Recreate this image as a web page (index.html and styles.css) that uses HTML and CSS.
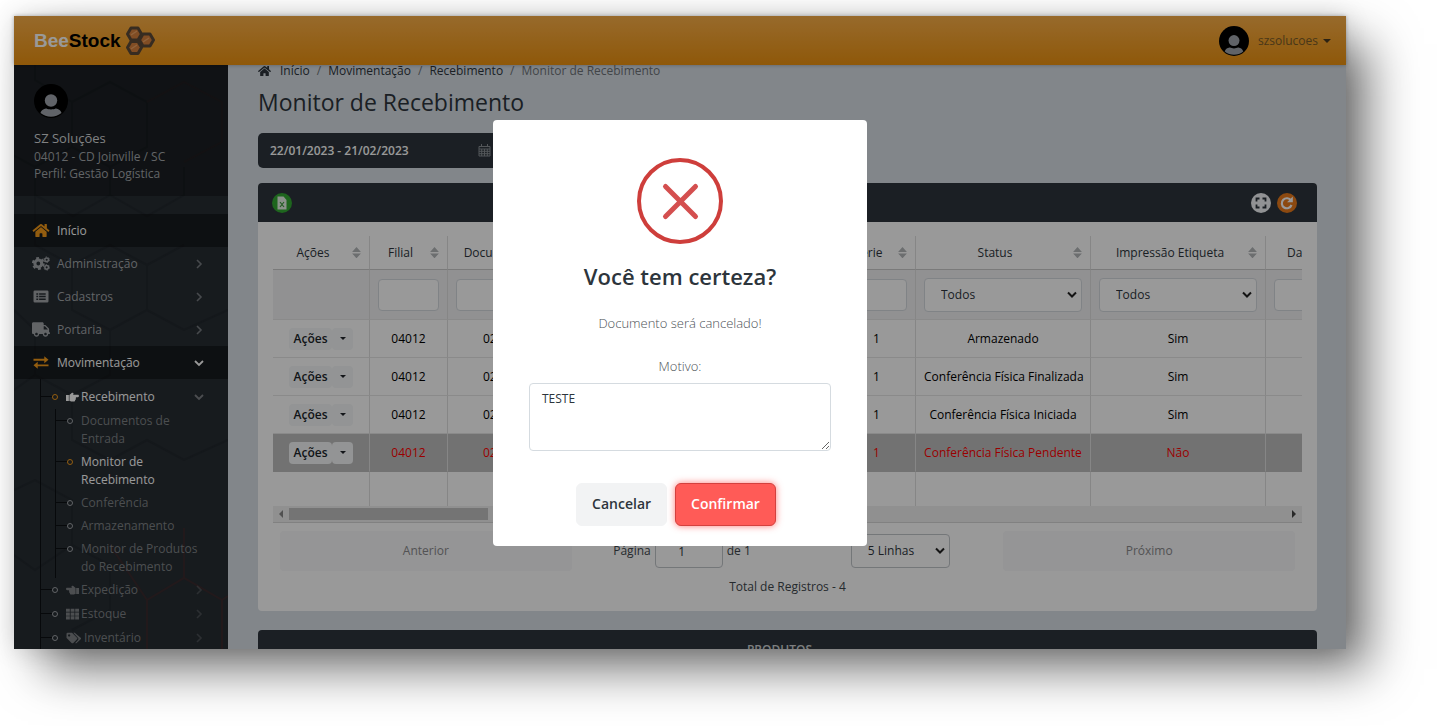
FILE: index.html
```html
<!DOCTYPE html>
<html lang="pt-BR">
<head>
<meta charset="utf-8">
<title>BeeStock - Monitor de Recebimento</title>
<link rel="stylesheet" href="styles.css">
</head>
<body>
<svg width="0" height="0" class="defs" aria-hidden="true">
  <symbol id="home" viewBox="0 0 576 512"><path d="M280.37 148.26L96 300.11V464a16 16 0 0 0 16 16l112.06-.29a16 16 0 0 0 15.92-16V368a16 16 0 0 1 16-16h64a16 16 0 0 1 16 16v95.64a16 16 0 0 0 16 16.05L464 480a16 16 0 0 0 16-16V300L295.67 148.26a12.19 12.19 0 0 0-15.3 0zM571.6 251.47L488 182.56V44.05a12 12 0 0 0-12-12h-56a12 12 0 0 0-12 12v72.61L318.47 43a48 48 0 0 0-61 0L4.34 251.47a12 12 0 0 0-1.6 16.9l25.5 31A12 12 0 0 0 45.15 301l235.22-193.74a12.19 12.19 0 0 1 15.3 0L530.9 301a12 12 0 0 0 16.9-1.6l25.5-31a12 12 0 0 0-1.7-16.93z"/></symbol>
  <symbol id="truck" viewBox="0 0 640 512"><path d="M624 352h-16V243.9c0-12.700-5.100-24.900-14.100-33.900L494 110.100c-9-9-21.200-14.100-33.900-14.100H416V48c0-26.500-21.500-48-48-48H48C21.500 0 0 21.500 0 48v320c0 26.500 21.500 48 48 48h16c0 53 43 96 96 96s96-43 96-96h128c0 53 43 96 96 96s96-43 96-96h48c8.800 0 16-7.200 16-16v-32c0-8.800-7.200-16-16-16zM160 464c-26.500 0-48-21.500-48-48s21.500-48 48-48 48 21.500 48 48-21.500 48-48 48zm320 0c-26.500 0-48-21.500-48-48s21.500-48 48-48 48 21.500 48 48-21.500 48-48 48zm80-208H416V144h44.100l99.900 99.900V256z"/></symbol>
  <symbol id="cogs" viewBox="0 0 20 16"><g fill="none" stroke="currentColor"><circle cx="7" cy="8" r="3.800" stroke-width="3.400"/><circle cx="7" cy="8" r="6" stroke-width="2.200" stroke-dasharray="3.140 3.143"/><circle cx="16.300" cy="3.800" r="2" stroke-width="1.700"/><circle cx="16.300" cy="3.800" r="3.100" stroke-width="1" stroke-dasharray="1.620 1.625"/><circle cx="16.300" cy="12.300" r="2" stroke-width="1.700"/><circle cx="16.300" cy="12.300" r="3.100" stroke-width="1" stroke-dasharray="1.620 1.625"/></g></symbol>
  <symbol id="list" viewBox="0 0 16 16"><path fill-rule="evenodd" d="M1.500 1.500h13A1.500 1.500 0 0 1 16 3v10a1.500 1.500 0 0 1-1.500 1.500h-13A1.500 1.500 0 0 1 0 13V3A1.500 1.500 0 0 1 1.500 1.500zM3 4.500v1.600h2V4.500zm3 0v1.600h7V4.500zM3 7.200v1.600h2V7.200zm3 0v1.600h7V7.200zM3 10v1.600h2V10zm3 0v1.600h7V10z"/></symbol>
  <symbol id="exchange" viewBox="0 0 16 16"><path d="M0 4h11.500V1.300L16 5l-4.500 3.700V6H0zM16 10v2H4.500v2.700L0 11l4.500-3.700V10z"/></symbol>
  <symbol id="hand" viewBox="0 0 16 14"><path d="M0 4.500h3.500V12H0zM4.200 4.500L7 2.200C8.600 1 9.900 2.500 9 3.700L8.600 4.300H14.600c1.800 0 1.800 2.900 0 2.900H12c.8.700.5 1.800-.3 2 .6.800.1 1.700-.6 1.800.2.900-.4 1.600-1.400 1.600H7C5.800 12.600 5.500 11.800 4.200 11.800z"/></symbol>
  <symbol id="hand-left" viewBox="0 0 16 14"><path transform="matrix(-1 0 0 1 16 0)" d="M0 4.500h3.500V12H0zM4.200 4.500L7 2.200C8.600 1 9.900 2.500 9 3.700L8.600 4.300H14.600c1.800 0 1.800 2.900 0 2.900H12c.8.700.5 1.800-.3 2 .6.800.1 1.700-.6 1.800.2.900-.4 1.600-1.400 1.600H7C5.800 12.600 5.500 11.800 4.200 11.800z"/></symbol>
  <symbol id="grid" viewBox="0 0 16 14"><path d="M0 .5h4.700v3.800H0zM5.700.5h4.700v3.800H5.700zM11.300.5H16v3.800h-4.700zM0 5.200h4.700V9H0zM5.700 5.200h4.700V9H5.700zM11.300 5.200H16V9h-4.700zM0 9.900h4.700v3.800H0zM5.700 9.900h4.700v3.800H5.700zM11.300 9.900H16v3.800h-4.700z"/></symbol>
  <symbol id="tags" viewBox="0 0 20 16"><path fill-rule="evenodd" d="M0 2.500A1.500 1.500 0 0 1 1.500 1h5.300c.5 0 .9.200 1.200.5l6 6c.7.700.7 1.600 0 2.200l-5 5c-.7.600-1.600.6-2.200 0l-6.300-6.300C.2 8.100 0 7.700 0 7.200zM3.500 3a1.500 1.500 0 1 0 .01 0z"/><path d="M9 1h1.500c.5 0 .9.200 1.200.5l7.200 6c.7.700.7 1.600 0 2.200l-5.400 5c-.6.600-1.300.6-1.900.1l3.700-4.100c.8-.9.800-2.200-.1-3.100z"/></symbol>
  <symbol id="chev" viewBox="0 0 10 10"><path d="M3 1l4 4-4 4" fill="none" stroke="currentColor" stroke-width="1.600"/></symbol>
  <symbol id="chevd" viewBox="0 0 10 10"><path d="M1 3l4 4 4-4" fill="none" stroke="currentColor" stroke-width="1.800"/></symbol>
  <symbol id="sort" viewBox="0 0 8 10"><path d="M0 4.500L4 0l4 4.500zM0 5.800h8L4 10.300z"/></symbol>
  <symbol id="user" viewBox="0 0 34 34"><circle cx="17" cy="17" r="17" fill="#000"/><path d="M6.500 29C7.500 25.500 11 24.500 12.500 24.500c2 1.200 7 1.200 9 0 1.500 0 5 1 6 4.500A17 17 0 0 1 6.500 29z" fill="#a0a6ad"/><circle cx="17" cy="16.500" r="6.200" fill="#a0a6ad"/></symbol>
</svg>

<div class="app">
  <header class="topbar">
    <a class="brand" href="#"><span class="brand-bee">Bee</span>Stock
      <svg class="brand-logo" viewBox="0 0 30 30" aria-hidden="true"><g fill="#d8803c" stroke="#5c4a38" stroke-width="3" stroke-linejoin="round"><path d="M6 2h7l3.500 6L13 14H6L2.500 8z"/><path d="M18 8h7l3.500 6L25 20h-7l-3.500-6z"/><path d="M6 15.500h7l3.500 6-3.500 6H6l-3.500-6z"/></g><path d="M6 9l6-4M18 16l6-4M6 23l6-4" stroke="#f0a565" stroke-width="1.500"/></svg>
    </a>
    <a class="account" href="#"><svg class="avatar-sm"><use href="#user"/></svg><span>szsolucoes</span><i class="caret"></i></a>
  </header>

  <div class="body">
    <aside class="sidebar">
      <svg class="hexes" viewBox="0 0 214 584" preserveAspectRatio="xMidYMin slice" aria-hidden="true">
        <g fill="none" stroke="#1f252a" stroke-width="2"><path d="M21 0v15L58 37v45L21 102-16 82M58 37L96 17l37 20v45L96 102 58 82M96 102v28l-37 21-38-21v-28M96 130l37 21 37-21v-28M21 130v50l37 20 38-20 37 20 37-20M58 200v45l38 20 37-20v-45M0 245l21 20v45l37 20 38-20v-45M133 245l37 20 44-20M21 310L0 325M58 330v45l38 20 37-20 37 20 44-20M0 425l21-10 37 20v45L21 505 0 490M58 480l38 20v45l-38 20"/></g>
        <g fill="none" stroke="#33292c" stroke-width="2"><path d="M133 37l37-20 38 20v40l-38 20"/></g>
        <g fill="none" stroke="#472b2b" stroke-width="2"><path d="M96 480l37 55M133 584v-49l37-22 38 22v49M170 513v-50M208 535l6-4"/></g>
      </svg>
      <section class="profile">
        <svg class="avatar"><use href="#user"/></svg>
        <strong class="profile-name">SZ Soluções</strong>
        <span>04012 - CD Joinville / SC</span>
        <span>Perfil: Gestão Logística</span>
      </section>
      <nav class="nav">
        <a class="item current" href="#"><svg class="ico accent"><use href="#home"/></svg>Início</a>
        <a class="item" href="#"><svg class="ico"><use href="#cogs"/></svg>Administração<svg class="arrow dim"><use href="#chev"/></svg></a>
        <a class="item" href="#"><svg class="ico"><use href="#list"/></svg>Cadastros<svg class="arrow dim"><use href="#chev"/></svg></a>
        <a class="item" href="#"><svg class="ico"><use href="#truck"/></svg>Portaria<svg class="arrow dim"><use href="#chev"/></svg></a>
        <a class="item current" href="#"><svg class="ico accent"><use href="#exchange"/></svg>Movimentação<svg class="arrow"><use href="#chevd"/></svg></a>
        <ul class="sub">
          <li><a class="on" href="#"><i class="dot"></i><svg class="mini"><use href="#hand"/></svg>Recebimento<svg class="arrow faint"><use href="#chevd"/></svg></a>
            <ul class="sub2">
              <li><a href="#"><i class="dot"></i>Documentos de<br>Entrada</a></li>
              <li><a class="on" href="#"><i class="dot"></i>Monitor de<br>Recebimento</a></li>
              <li><a href="#"><i class="dot"></i>Conferência</a></li>
              <li><a href="#"><i class="dot"></i>Armazenamento</a></li>
              <li><a href="#"><i class="dot"></i>Monitor de Produtos<br>do Recebimento</a></li>
            </ul>
          </li>
          <li><a href="#"><i class="dot"></i><svg class="mini"><use href="#hand-left"/></svg>Expedição<svg class="arrow faint"><use href="#chev"/></svg></a></li>
          <li><a href="#"><i class="dot"></i><svg class="mini"><use href="#grid"/></svg>Estoque<svg class="arrow faint"><use href="#chev"/></svg></a></li>
          <li><a href="#"><i class="dot"></i><svg class="mini wide"><use href="#tags"/></svg>Inventário<svg class="arrow faint"><use href="#chev"/></svg></a></li>
        </ul>
      </nav>
    </aside>

    <main class="main">
      <nav class="crumbs"><svg class="crumb-home"><use href="#home"/></svg><a href="#">Início</a><i>/</i><a href="#">Movimentação</a><i>/</i><a href="#">Recebimento</a><i>/</i><span>Monitor de Recebimento</span></nav>
      <h1 class="title">Monitor de Recebimento</h1>
      <button class="range" type="button">22/01/2023 - 21/02/2023
        <svg class="cal" viewBox="0 0 13 13" aria-hidden="true"><path d="M1 2.500h11v9.500H1zM1 5h11M3.500 0v3M9.500 0v3M3.700 5v7M6.500 5v7M9.300 5v7M1 7.300h11M1 9.700h11" fill="none" stroke="currentColor"/></svg>
      </button>

      <section class="panel">
        <div class="panel-head">
          <button class="round green" type="button" aria-label="Exportar"><svg viewBox="0 0 20 20"><path d="M5.500 3.500h6L14.500 7v9.500h-9z" fill="#e8f3e8"/><path d="M8 9l4 5M12 9l-4 5" stroke="#3a9a3a" stroke-width="1.200"/></svg></button>
          <span class="spring"></span>
          <button class="round white" type="button" aria-label="Expandir"><svg viewBox="0 0 20 20"><path d="M5.500 8.500v-3h3M11.500 5.500h3v3M14.500 11.500v3h-3M8.500 14.500h-3v-3" fill="none" stroke="#2d353c" stroke-width="1.800"/></svg></button>
          <button class="round orange" type="button" aria-label="Recarregar"><svg viewBox="0 0 20 20"><path d="M14 7.500A5 5 0 1 0 14.500 12" fill="none" stroke="#fff" stroke-width="2.200"/><path d="M15.800 3.500v5.700h-5.700z" fill="#fff"/></svg></button>
        </div>
        <div class="panel-body">
          <div class="table-wrap">
            <table class="grid">
              <colgroup><col class="c-act"><col class="c-sm"><col class="c-doc"><col class="c-mid"><col class="c-sm"><col class="c-lg"><col class="c-lg"><col class="c-lg"></colgroup>
              <thead>
                <tr><th>Ações<svg class="sort"><use href="#sort"/></svg></th><th>Filial<svg class="sort"><use href="#sort"/></svg></th><th>Documento<svg class="sort"><use href="#sort"/></svg></th><th></th><th>Série<svg class="sort"><use href="#sort"/></svg></th><th>Status<svg class="sort"><use href="#sort"/></svg></th><th>Impressão Etiqueta<svg class="sort"><use href="#sort"/></svg></th><th class="start">Data</th></tr>
                <tr class="filters"><td></td><td><input aria-label="Filial"></td><td><input aria-label="Documento"></td><td></td><td><input aria-label="Série"></td><td><select aria-label="Status"><option>Todos</option></select></td><td><select aria-label="Impressão Etiqueta"><option>Todos</option></select></td><td><input aria-label="Data"></td></tr>
              </thead>
              <tbody>
                <tr><td><span class="split"><button type="button">Ações</button><button type="button" aria-label="Mais"><i class="caret"></i></button></span></td><td>04012</td><td class="cut">02</td><td></td><td>1</td><td>Armazenado</td><td>Sim</td><td></td></tr>
                <tr><td><span class="split"><button type="button">Ações</button><button type="button" aria-label="Mais"><i class="caret"></i></button></span></td><td>04012</td><td class="cut">02</td><td></td><td>1</td><td>Conferência Física Finalizada</td><td>Sim</td><td></td></tr>
                <tr><td><span class="split"><button type="button">Ações</button><button type="button" aria-label="Mais"><i class="caret"></i></button></span></td><td>04012</td><td class="cut">02</td><td></td><td>1</td><td>Conferência Física Iniciada</td><td>Sim</td><td></td></tr>
                <tr class="pending"><td><span class="split"><button type="button">Ações</button><button type="button" aria-label="Mais"><i class="caret"></i></button></span></td><td>04012</td><td class="cut">02</td><td></td><td>1</td><td>Conferência Física Pendente</td><td>Não</td><td></td></tr>
                <tr class="blank"><td></td><td></td><td></td><td></td><td></td><td></td><td></td><td></td></tr>
              </tbody>
            </table>
          </div>
          <div class="scroll"><i class="tri left"></i><span class="track"><span class="thumb"></span></span><i class="tri right"></i></div>
          <div class="pager">
            <button class="page-btn" type="button" disabled>Anterior</button>
            <div class="page-mid">
              <div class="page-no"><label for="pg">Página</label><input id="pg" value="1"><span>de 1</span></div>
              <select aria-label="Linhas por página"><option>5 Linhas</option></select>
            </div>
            <button class="page-btn" type="button" disabled>Próximo</button>
          </div>
          <p class="total">Total de Registros - 4</p>
        </div>
      </section>

      <section class="panel">
        <div class="panel-head products">PRODUTOS</div>
      </section>
    </main>
  </div>

  <div class="overlay">
    <div class="modal" role="dialog" aria-labelledby="ask">
      <svg class="error" viewBox="0 0 86 86" aria-hidden="true"><circle cx="43" cy="43" r="41" fill="none" stroke="#ce3e3b" stroke-width="4"/><path d="M28.500 28.500l30 30M58.500 28.500l-30 30" stroke="#d44f4f" stroke-width="5" stroke-linecap="round"/></svg>
      <h2 class="ask" id="ask">Você tem certeza?</h2>
      <p class="info">Documento será cancelado!</p>
      <label class="reason" for="motivo">Motivo:</label>
      <textarea class="motivo" id="motivo">TESTE</textarea>
      <div class="actions"><button class="btn cancel" type="button">Cancelar</button><button class="btn confirm" type="button">Confirmar</button></div>
    </div>
  </div>
</div>
</body>
</html>
```
FILE: styles.css
```css
* { box-sizing: border-box; }
body {
  margin: 0;
  height: 100vh;
  padding: 16px 91px 77px 14px;
  overflow: hidden;
  background: #fff;
  font: 12px/18px "Open Sans", "Noto Sans", sans-serif;
  color: #2d353c;
}
a { color: inherit; text-decoration: none; }
ul { list-style: none; margin: 0; padding: 0; }
svg { fill: currentColor; flex: none; }
.defs { position: absolute; }
input, select, button, textarea { font: inherit; color: inherit; }

.app {
  position: relative;
  display: flex;
  flex-direction: column;
  height: 100%;
  box-shadow: 26px 24px 46px -4px rgba(0, 0, 0, .55), 0 0 24px rgba(0, 0, 0, .16);
}

/* top bar */
.topbar {
  position: relative;
  z-index: 1;
  flex: none;
  display: flex;
  align-items: center;
  justify-content: space-between;
  height: 49px;
  padding: 0 15px 0 20px;
  background: linear-gradient(#fdb149, #ee9310);
  box-shadow: 0 0 4px rgba(0, 0, 0, .3);
}
.brand { display: flex; align-items: center; font: bold 19px/24px "Liberation Sans", Arial, sans-serif; color: #000; }
.brand-bee { color: #fff; }
.brand-logo { width: 30px; height: 30px; margin-left: 4px; }
.account { display: flex; align-items: center; color: #7a5c28; }
.avatar-sm { width: 30px; height: 30px; margin-right: 9px; }
.caret { border: 4px solid transparent; border-top-color: currentColor; border-bottom: 0; }
.account .caret { margin-left: 5px; color: #4a3a20; }

/* sidebar */
.body { flex: 1; min-height: 0; display: flex; overflow: hidden; }
.sidebar { position: relative; flex: none; width: 214px; overflow: hidden; background: #272d33; color: #a3a7ab; }
.hexes { position: absolute; top: 0; left: 0; width: 100%; opacity: .6; }
.profile {
  position: relative;
  display: flex;
  flex-direction: column;
  height: 131px;
  padding: 19px 20px 0;
  margin-bottom: 18px;
  line-height: 17px;
  background: rgba(0, 0, 0, .3);
}
.avatar { width: 34px; height: 34px; margin-bottom: 11px; }
.profile-name { font-size: 13px; line-height: 19px; font-weight: 500; color: #d5d8da; }
.nav { position: relative; font-weight: 500; }
.item { display: flex; align-items: center; height: 33px; padding: 0 24px 0 18px; }
.ico { width: 18px; height: 15px; margin-right: 7px; }
.accent { color: #f59c1a; }
.current { background: rgba(0, 0, 0, .4); color: #fff; }
.arrow { width: 10px; height: 10px; margin-left: auto; }
.dim { opacity: .65; }
.faint { opacity: .4; }
.sub { position: relative; padding-top: 6px; margin-left: 26px; border-left: 1px solid #0d1013; color: #7f8386; }
.sub a { display: flex; padding: 3px 24px 3px 0; align-items: flex-start; }
.sub .arrow { margin-top: 4px; }
.sub .on { color: #fff; }
.dot { position: relative; flex: none; width: 6px; height: 6px; margin: 6px 8px 0 11px; border: 1px solid #a3a7ab; border-radius: 50%; }
.dot::before { content: ""; position: absolute; right: 5px; top: 1px; width: 11px; border-top: 1px solid #0d1013; }
.on > .dot { border-color: #f59c1a; }
.mini { width: 13px; height: 12px; margin: 3px 2px 0 0; }
.wide { width: 16px; }
.sub2 { margin-left: 14px; border-left: 1px solid #0d1013; }
.sub .sub2 a { padding: 3px 0 2px; }

/* content */
.main { flex: 1; min-width: 0; padding: 0 29px 0 30px; background: #d9e0e7; }
.crumbs { display: flex; align-items: center; line-height: 10px; }
.crumbs i, .crumbs span { color: #6f7478; font-style: normal; }
.crumbs i { padding: 0 7px; }
.crumb-home { width: 13px; height: 12px; margin-right: 9px; }
.title { margin: 10px 0 15px; font-size: 23px; line-height: 31px; font-weight: 400; }
.range {
  display: flex;
  align-items: center;
  justify-content: space-between;
  width: 245px;
  height: 35px;
  margin-bottom: 15px;
  padding: 0 12px;
  border: 0;
  border-radius: 5px;
  background: #2d353c;
  color: #fff;
  font-weight: 600;
}
.cal { width: 13px; height: 13px; color: #8a9095; }
.panel { margin-bottom: 19px; border-radius: 4px; background: #fff; overflow: hidden; }
.panel-head { display: flex; align-items: center; gap: 6px; height: 39px; padding: 0 20px 0 14px; background: #2d353c; color: #fff; }
.products { justify-content: center; padding: 0 16px 0 0; font-weight: 600; color: #d0d3d5; }
.spring { flex: 1; }
.round { width: 20px; height: 20px; padding: 0; border: 0; border-radius: 50%; }
.round svg { display: block; width: 20px; height: 20px; }
.green { background: #32a932; }
.white { background: #f2f4f7; }
.orange { background: #e97b1c; }
.panel-body { padding: 14px 15px 15px; }

/* table */
.table-wrap { overflow: hidden; }
.grid { width: 1168px; table-layout: fixed; border-collapse: separate; border-spacing: 0; text-align: center; color: #000; }
.c-act { width: 97px; }
.c-sm { width: 78px; }
.c-doc { width: 114px; }
.c-mid { width: 276px; }
.c-lg { width: 175px; }
.grid th, .grid td { height: 38px; padding: 0 8px; border-right: 1px solid #e0e0e0; border-bottom: 1px solid #e6e6e6; font-weight: 400; white-space: nowrap; }
.grid th { position: relative; height: 34px; padding: 0 24px 0 8px; border-bottom: 1px solid #ccc; font-weight: 500; color: #2d353c; }
.grid .start { padding-left: 21px; text-align: left; }
.sort { position: absolute; right: 8px; top: 11px; width: 9px; height: 11px; color: #b4b7ba; }
.grid .filters td { height: 50px; background: #f2f2f4; }
.grid .cut { text-align: left; padding-left: 35px; }
.grid .pending td { background: #bfbfbf; color: #f00; border-bottom-color: #bfbfbf; }
.grid .blank td { height: 34px; border-bottom: 0; }
.filters input, .filters select, .pager input, .pager select { display: block; width: 100%; height: 34px; border: 1px solid #d5dbe0; border-radius: 4px; background: #fff; color: #2d353c; }
.filters input { height: 32px; }
select { appearance: none; padding: 0 16px; }
.filters select, .pager select {
  background: url("data:image/svg+xml,%3Csvg xmlns='http://www.w3.org/2000/svg' width='10' height='8'%3E%3Cpath d='M1 1.500l4 4 4-4' fill='none' stroke='%23222' stroke-width='2'/%3E%3C/svg%3E") no-repeat right 4px center #fff;
}
.split { display: inline-flex; vertical-align: middle; font-weight: 600; color: #2d353c; }
.split button { display: flex; align-items: center; height: 22px; padding: 0 5px; border: 0; border-radius: 4px; background: #f5f7f8; color: #20252a; }
.split button + button { width: 21px; justify-content: center; }
.split .caret { border-width: 3px; border-bottom: 0; }
.scroll { display: flex; align-items: center; height: 17px; padding: 0 6px; gap: 6px; background: #f1f1f1; border-bottom: 1px solid #d8d8d8; }
.track { flex: 1; }
.thumb { display: block; width: 20%; height: 12px; background: #c1c1c1; }
.tri { border: 4px solid transparent; }
.left { border-right-color: #888; border-left: 0; }
.right { border-left-color: #444; border-right: 0; }
.pager { display: flex; align-items: center; padding: 8px 7px 0; color: #40474d; }
.page-btn { flex: 2; height: 40px; border: 0; border-radius: 4px; background: #f8f8fa; color: #8a8a8c; font-weight: 500; }
.page-mid { flex: 3; display: flex; justify-content: center; gap: 100px; padding-right: 12px; }
.page-no { display: flex; align-items: center; gap: 4px; }
.pager input { width: 68px; text-align: center; padding: 0 14px 0 0; }
.pager select { width: 99px; border-color: #c2c6ca; }
.pager input { border-color: #c2c6ca; }
.total { margin: 7px 0 0; text-align: center; color: #40474d; }

/* confirmation dialog */
.overlay { position: absolute; inset: 0; z-index: 2; display: flex; align-items: center; justify-content: center; background: rgba(0, 0, 0, .4); }
.modal { display: flex; flex-direction: column; align-items: center; width: 374px; padding: 38px 36px 20px; border-radius: 4px; background: #fff; }
.error { width: 86px; height: 86px; }
.ask { margin: 16px 0 16px; font-size: 22px; line-height: 32px; font-weight: 600; }
.info, .reason { margin: 0; font-size: 13px; line-height: 20px; font-weight: 300; color: #4c5257; }
.info { margin: 5px 0 23px; }
.motivo { width: 100%; height: 68px; margin: 7px 0 32px; padding: 6px 12px; border: 1px solid #d5dbe0; border-radius: 4px; resize: vertical; }
.actions { display: flex; gap: 8px; padding-right: 8px; }
.btn { height: 43px; padding: 0 15px; border: 1px solid #f2f3f4; border-radius: 6px; background: #f2f3f4; font-size: 14px; font-weight: 600; color: #2d353c; }
.actions .confirm { border-color: #d3413e; background: #ff5b57; color: #fff; box-shadow: 0 0 7px rgba(255, 91, 87, .8); }
```
